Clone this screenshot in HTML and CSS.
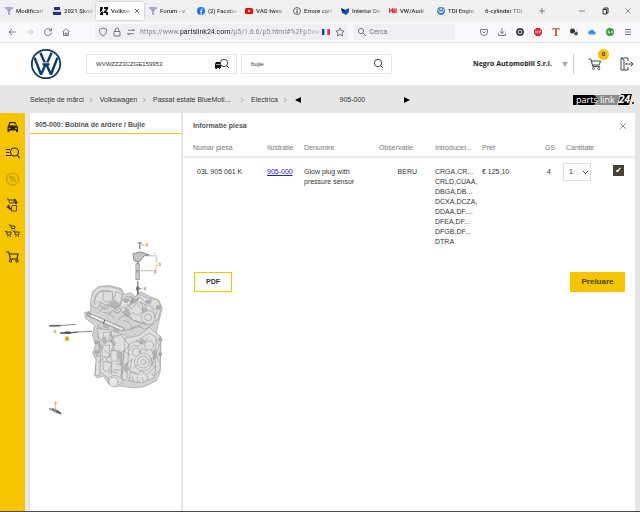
FILE: index.html
```html
<!DOCTYPE html>
<html lang="ro">
<head>
<meta charset="utf-8">
<title>partslink24</title>
<link rel="stylesheet" href="styles.css">
</head>
<body>
<div class="tabs">
  <a class="tab" href="#"><svg class="ico8" viewBox="0 0 8 8"><path d="M0 1h8M2 3h4M4 3v5" stroke="#8d8fc0" stroke-width="1.4"/></svg><span>Modificari</span></a>
  <a class="tab" href="#"><svg class="ico8" viewBox="0 0 8 8"><path d="M1 0h6v3H1zM0 5h8v3H0z" fill="#2b2d86"/><path d="M0 4h8" stroke="#99a" stroke-width=".6"/></svg><span>2021 Skod</span></a>
  <a class="tab active" href="#"><svg class="ico8" viewBox="0 0 8 8"><path d="M0 0h3l-1 4-2 1zM4 0h4v2L6 5h2v3H6V6H3l3-4H4zM0 6l3-2v4H0z" fill="#111"/></svg><span>Volksw</span><svg class="close" viewBox="0 0 6 6"><path d="M1 1l4 4M5 1L1 5" stroke="#444" stroke-width=".8"/></svg></a>
  <a class="tab" href="#"><svg class="ico8" viewBox="0 0 8 8"><path d="M0 1h8M2 3h4M4 3v5" stroke="#8d8fc0" stroke-width="1.4"/></svg><span>Forum - v</span></a>
  <a class="tab" href="#"><svg class="ico8" viewBox="0 0 8 8"><circle cx="4" cy="4" r="4" fill="#1877f2"/><path d="M4.2 8V3q0-1.3 1.5-1M3 4.500h2.400" fill="none" stroke="#fff"/></svg><span>(2) Facebo</span></a>
  <a class="tab" href="#"><svg class="ico8" viewBox="0 0 8 8"><rect y="1" width="8" height="6" rx="1.500" fill="#f00"/><path d="M3 2.500v3L5.600 4z" fill="#fff"/></svg><span>VAG twea</span></a>
  <a class="tab" href="#"><svg class="ico8" viewBox="0 0 8 8"><circle cx="4" cy="4" r="3.500" fill="none" stroke="#444" stroke-width=".8"/><path d="M4 1.800v1M4 3.400v3" stroke="#333"/></svg><span>Errore cari</span></a>
  <a class="tab" href="#"><svg class="ico8" viewBox="0 0 8 8"><path d="M0 1l4 2 4-2v4L5 8 1 6z" fill="#1256b8"/><path d="M0 1l4 2v2L1 4z" fill="#0a2f70"/></svg><span>Interior De</span></a>
  <a class="tab" href="#"><svg class="ico8" viewBox="0 0 8 8"><path d="M.5 6V2L2 4l1.500-2v4M5 6V2h2l.5 1-.5 1H5l2.500 2" fill="none" stroke="#e8303c" stroke-width="1.200"/></svg><span>VW/Audi</span></a>
  <a class="tab" href="#"><svg class="ico8" viewBox="0 0 8 8"><circle cx="4" cy="4" r="4" fill="#4a7fc0"/><path d="M1 2l2 4 1-2 1 2 2-4M3 1l1 2 1-2" fill="none" stroke="#fff" stroke-width=".7"/></svg><span>TDI Engin</span></a>
  <a class="tab" href="#"><span>6-cylinder TDI</span></a>
  <button class="plus" aria-label="New tab"><svg class="ico8" viewBox="0 0 8 8"><path d="M1 4h6M4 1v6" stroke="#666" stroke-width=".8"/></svg></button>
  <div class="win">
    <button aria-label="Minimize"><svg class="ico8" viewBox="0 0 8 8"><path d="M1 4h6" stroke="#555" stroke-width=".8"/></svg></button>
    <button aria-label="Restore"><svg class="ico8" viewBox="0 0 8 8"><path d="M2 2.500h3.500V7H2zM3 2.500V1h4v5H5.500" fill="none" stroke="#333"/></svg></button>
    <button aria-label="Close"><svg class="ico8" viewBox="0 0 8 8"><path d="M1.500 1.500l5 5M6.500 1.500l-5 5" stroke="#666" stroke-width=".7"/></svg></button>
  </div>
</div>
<div class="toolbar">
  <div class="tools">
    <button aria-label="Back"><svg class="ico10" viewBox="0 0 10 10"><path d="M8.500 5H2M5 2L2 5l3 3" class="ln"/></svg></button>
    <button aria-label="Forward"><svg class="ico10" viewBox="0 0 10 10"><path d="M1.500 5H8M5 2l3 3-3 3" class="ln pale"/></svg></button>
    <button aria-label="Reload"><svg class="ico10" viewBox="0 0 10 10"><path d="M8 3.300A3.500 3.500 0 1 0 8.500 5.500M8.500 1v2.800H5.800" class="ln"/></svg></button>
    <button aria-label="Home"><svg class="ico10" viewBox="0 0 10 10"><path d="M1.500 5L5 1.500 8.500 5M2.500 4.500v4h5v-4M4.200 8.500V6h1.600v2.500" class="ln"/></svg></button>
  </div>
  <div class="field url">
    <svg class="ico10" viewBox="0 0 10 10"><path d="M5 1l3.500 1.200C8.500 6 7.500 8 5 9 2.500 8 1.500 6 1.500 2.200z" class="ln"/></svg>
    <svg class="ico10" viewBox="0 0 10 10"><path d="M2 4.500h6V9H2zM3.200 4.500V3q0-2 1.800-2t1.800 2v1.500" class="ln"/></svg>
    <svg class="ico10" viewBox="0 0 10 10"><path d="M2 3.300h7M6.500 1.800L8 3.300M8 6.700H1M3.500 8.200L2 6.700" class="ln"/></svg>
    <span class="address">https://www.<em>partslink24.com</em>/p5/1.6.6/p5.html#%2Fp5vwag</span>
    <svg class="ico10" viewBox="0 0 10 10"><path d="M1 2h2.700v6H1z" fill="#1b3f9c"/><path d="M3.700 2h2.600v6H3.700z" fill="#fff"/><path d="M6.300 2H9v6H6.300z" fill="#e8323e"/></svg>
    <svg class="ico10" viewBox="0 0 10 10"><path d="M5 1l1.200 2.700 2.900.3L7 6l.6 3L5 7.500 2.400 9 3 6 .9 4l2.900-.3z" class="ln"/></svg>
  </div>
  <div class="field find">
    <svg class="ico10" viewBox="0 0 10 10"><circle cx="4" cy="4" r="2.600" class="ln"/><path d="M6 6l3 3" class="ln"/></svg>
    <input type="text" aria-label="Cerca" placeholder="Cerca">
  </div>
  <div class="tools">
    <button aria-label="Pocket"><svg class="ico10" viewBox="0 0 10 10"><path d="M1.500 2.500h7V5A3.500 3.500 0 0 1 1.500 5zM3.200 4.200L5 6l1.800-1.800" class="ln"/></svg></button>
    <button aria-label="Downloads"><svg class="ico10" viewBox="0 0 10 10"><path d="M5 1v5.500M2.700 4.300L5 6.500l2.300-2.200M1.500 6.500v2h7v-2" class="ln"/></svg></button>
    <button aria-label="Camera"><svg class="ico10" viewBox="0 0 10 10"><circle cx="5" cy="5" r="4" fill="#484b52"/><circle cx="5" cy="5" r="1.700" fill="#484b52" stroke="#ddd" stroke-width=".8"/></svg></button>
    <button aria-label="Ad blocker"><svg class="ico10" viewBox="0 0 10 10"><path d="M3.300 1h3.400L9 3.300v3.400L6.700 9H3.300L1 6.700V3.300z" fill="#e91e3e"/><path d="M2.200 6.300l.8-2.500.8 2.500M4.700 3.800h.8q.8.600 0 1.200.8.600 0 1.200h-.8zM6.800 6.300V3.800h1v1.300h-1" fill="none" stroke="#fff" stroke-width=".5"/></svg></button>
    <button aria-label="Text"><svg class="ico10" viewBox="0 0 10 10"><path d="M1.500 1h7v2.500H8L7.300 2H6v6l1 1H3l1-1V2H2.700L2 3.500h-.5z" fill="#c8684e"/></svg></button>
    <button aria-label="Tools"><svg class="ico10" viewBox="0 0 10 10"><circle cx="3.500" cy="4" r="2.500" fill="#333"/><circle cx="7" cy="6.500" r="2" fill="#555"/><path d="M4 7l5-5" stroke="#ccc"/></svg></button>
    <button aria-label="Cloud"><svg class="ico10" viewBox="0 0 10 10"><path d="M2.800 7.500a1.700 1.700 0 0 1 0-3.400 2.300 2.300 0 0 1 4.400.4 1.500 1.500 0 0 1 0 3z" fill="#2f93f5"/></svg></button>
    <button aria-label="Extension"><svg class="ico10" viewBox="0 0 10 10"><circle cx="5" cy="5" r="4" fill="#3d9b47"/><path d="M4.500 4Q3.200 3.300 3 5q.2 1.500 1.600 1V5M6 5h2M7 4v2" fill="none" stroke="#fff" stroke-width=".7"/></svg></button>
    <button aria-label="Menu"><svg class="ico10" viewBox="0 0 10 10"><path d="M2 2.500h6M2 5h6M2 7.500h6" class="ln"/></svg></button>
  </div>
</div>

<header class="head">
  <svg class="vw" viewBox="0 0 32 32"><circle cx="16" cy="16" r="14.200" fill="#fff" stroke="#0e3c66" stroke-width="1.800"/><path d="M10.400 4.800L16 17.500 21.600 4.800M12.500 16.200h7M4.600 9.800L11 26.500 16 15.500 21 26.500 27.400 9.800" fill="none" stroke="#0e3c66" stroke-width="2.400" stroke-linejoin="bevel"/><path d="M12.800 14.800h6.400" stroke="#fff" stroke-width=".8"/></svg>
  <div class="box">
    <input type="text" aria-label="VIN" value="WVWZZZ3CZGE159953">
    <svg class="carfind" viewBox="0 0 16 12"><path d="M1 6l1-2h4v2l1 1v3H6v1H5v-1H3v1H1.500v-1H1z" fill="#111"/><path d="M2 6.500h4" stroke="#ddd" stroke-width=".7"/><circle cx="10" cy="5" r="3.700" fill="#fff" stroke="#333" stroke-width=".9"/><path d="M12.600 7.600L15 10" stroke="#333"/></svg>
  </div>
  <div class="box">
    <input type="text" aria-label="Căutare" value="bujie">
    <svg class="carfind" viewBox="0 0 16 12"><circle cx="9" cy="5" r="3.700" fill="none" stroke="#333" stroke-width=".9"/><path d="M11.600 7.600L14 10" stroke="#333"/></svg>
  </div>
  <button class="account">Negro Automobili S.r.l.<svg class="ico8" viewBox="0 0 8 8"><path d="M1 2h6L4 7z" fill="#aaa"/></svg></button>
  <button class="cart" aria-label="Coș"><svg class="ico16" viewBox="0 0 16 16"><path d="M1.500 3h2.300l2 7.500h7M4.300 5h9.200l-1.300 4H5.500" fill="none" stroke="#333" stroke-width=".9"/><circle cx="6.500" cy="12.500" r="1" fill="none" stroke="#333" stroke-width=".8"/><circle cx="11.800" cy="12.500" r="1" fill="none" stroke="#333" stroke-width=".8"/></svg><span class="badge">0</span></button>
  <button class="exit" aria-label="Ieșire"><svg class="ico16" viewBox="0 0 16 16"><path d="M9 5V2H2v12h7v-3M2 2l3 2v10M6 8h7.500M11.500 5.500L14 8l-2.500 2.500" fill="none" stroke="#333" stroke-width=".9"/></svg></button>
</header>

<nav class="crumbs">
  <a href="#">Selecţie de mărci</a><i></i>
  <a href="#">Volkswagen</a><i></i>
  <a class="long" href="#">Passat estate BlueMoti...</a><i></i>
  <a href="#">Electrica</a><i></i>
  <div class="pager">
    <button aria-label="Înapoi"><svg class="ico8" viewBox="0 0 8 8"><path d="M7 1v6L1 4z"/></svg></button>
    <span>905-000</span>
    <button aria-label="Înainte"><svg class="ico8" viewBox="0 0 8 8"><path d="M1 1v6l6-3z"/></svg></button>
  </div>
  <svg class="brand" viewBox="0 0 62 12"><path d="M20 1h27l-3 10H20z" fill="#8a8a8a"/><path d="M0 1h21l4 4-4 6H0z"/><path d="M48 0h11l-3 11H45z"/><text x="3" y="9">parts</text><text x="27" y="9" fill="#ddd">link</text><text x="46" y="9" class="big">24</text><circle cx="60" cy="9" r="1"/></svg>
</nav>

<main class="main">
  <nav class="side">
    <a href="#" aria-label="Vehicul"><svg class="ico16" viewBox="0 0 16 16"><path d="M3 7l1.500-4h6L12 7l1 1v5h-2v-1.500H4.500V13h-2V8z" fill="#2a2500"/><path d="M4.500 6.500l.8-2.300h4.900l.8 2.300z" fill="#f5c500"/><path d="M3.500 9.300h2M10 9.300h2" stroke="#f5c500"/></svg></a>
    <a href="#" aria-label="Căutare"><svg class="ico16" viewBox="0 0 16 16"><path d="M1 4.500h4M1 7.500h3.500M1 10.500h5" stroke="#2a2500"/><circle cx="9.500" cy="7" r="4" fill="none" stroke="#2a2500" stroke-width="1.100"/><path d="M12.300 10l2.200 3" stroke="#2a2500" stroke-width="1.200"/></svg></a>
    <a href="#" aria-label="Oferte"><svg class="ico16" viewBox="0 0 16 16"><g fill="none" stroke="#a88600" stroke-width=".8"><circle cx="7.500" cy="8" r="6"/><circle cx="5.700" cy="6.500" r="1.100"/><circle cx="9.500" cy="9.500" r="1.100"/><path d="M9.500 5.500l-4 5"/></g></svg></a>
    <a href="#" aria-label="Transfer"><svg class="ico16" viewBox="0 0 16 16"><g fill="none" stroke="#2a2500" stroke-width=".8"><path d="M2 2h1.500l1 4h4l1-3H4M7.500 8.500h4V14h-5v-4z"/><path d="M9 2.500q2 0 2.300 3M3.500 9q0 3 2.500 3" stroke-width="1.300"/></g><path d="M9 5h4l-2 2.500zM1.500 10.500h4l-2-3z" fill="#2a2500"/></svg></a>
    <a href="#" aria-label="Coșuri"><svg class="ico16" viewBox="0 0 16 16"><g fill="none" stroke="#2a2500" stroke-width=".9"><path d="M4 2h1.500l1 3.500h3L10 3H6M6.500 7h.8M9 7h.8M0 8.500h1.500l1 3.500h3L6.200 9H2M2.500 13.500h.8M5 13.500h.8M8 8.500h1.500l1 3.500h3l.7-3H10M10.500 13.500h.8M13 13.500h.8"/></g></svg></a>
    <a href="#" aria-label="Coș"><svg class="ico16" viewBox="0 0 16 16"><path d="M1.500 3h2.300l1.500 7h7.500M4.300 5h8.700l-1 5" fill="none" stroke="#2a2500" stroke-width="1.100"/><circle cx="5.500" cy="12" r="1.200" fill="none" stroke="#2a2500"/><circle cx="12" cy="12" r="1.200" fill="none" stroke="#2a2500"/></svg></a>
  </nav>

  <section class="panel figure">
    <h2>905-000: Bobina de ardere / Bujie</h2>
    <div class="drawing">
      <svg viewBox="30 229 152 186" stroke-linejoin="round" stroke-linecap="round">
        <!-- cylinder block silhouette -->
        <path d="M91 303L93 291 99 286 110 285 122 288 125 294 131 292 136 296 141 291 153 297 160 300 163 308 160 320 157 333 162 337 161 372 157 381 144 387 134 388 120 386 110 385 104 376 98 378 95 375 97 360 93 353 96 345 93 335 95 325 86 318 85 312 91 311z" fill="#d2d2d2" stroke="#aaa" stroke-width=".8"/>
        <g fill="#dedede" stroke="#999" stroke-width=".6">
          <path d="M91 304q0-15 10-18 10-1 20 3l3 5-8 10-13-4-6 8z"/>
          <path d="M95 304q-1-11 6-14h9q5 4 3 9l-5 6-9-4z"/>
          <path d="M104 291h9v9q-4 3-9 0zM117 291l6 3-2 9-7-2z"/>
          <path d="M121 303l6-7 8 1 5-3 10 4 8 1 4 8-3 12-12 5-15-5-11-9z"/>
          <path d="M126 308q6-8 14-6l12 4 4 8-8 9-14-3z"/>
          <circle cx="149" cy="317" r="7"/><circle cx="149" cy="317" r="3.500"/>
          <path d="M98 328l14 2 10 4v46l-12-1-10-8 1-22z"/>
          <path d="M104 332h8v9h-8zM114 335h8v10h-8zM103 345h7v12h-7zM112 350h9v11h-9zM104 361l8 2v11l-8-4z"/>
          <path d="M114 337l10-3 5 4-1 12-9 3-5-5z"/>
          <path d="M126 338l14-3 10-8 11 9v34l-9 8-15 4-14-3z"/>
          <path d="M130 344l10-5 10-6 7 4-1 34-12 8-16-1z"/>
          <path d="M131 372l8 3 2-5 6 5 10-9-2 12-13 5-11-2z"/>
          <circle cx="144" cy="362" r="9"/><circle cx="144" cy="362" r="6"/><circle cx="144" cy="362" r="2.500"/>
          <circle cx="150" cy="345" r="4.500"/><circle cx="137" cy="352" r="4"/>
          <path d="M109 378q4-4 9-2l6 4-6 7q-7 0-9-4z"/><ellipse cx="114" cy="382" rx="4.500" ry="4.800" fill="#e8e8e8"/>
          <path d="M97 355l4 2-1 18-4 1z"/>
        </g>
        <g fill="#b5b5b5"><path d="M110 303l6-4 4 5-4 4zM123 311l5-3 4 6-5 3zM102 338l4-2 2 6-4 3zM117 353l4-3 1 8-4 2zM139 341l4-3 3 3-4 4zM130 300l4-3 2 5-4 3zM142 309l5-3 2 4-5 3zM124 366l4-4 2 8-4 3zM104 322l7 3-2 4-6-2zM113 326l8 3-2 4-5-2zM153 351l4-4v11l-3 3zM99 345l3-2v8l-3 2zM147 299l6 1-2 4-5-1z"/></g>
        <g fill="none" stroke="#858585" stroke-width=".5">
          <path d="M94 302l4-9 6-3M99 312l9-8 8 4 5-4M108 316l5-6 6 3 5-7 6 4M119 319l7-5 5 3M122 298l5 4 4-6 5 5 4-5 6 6 6-3M128 304l4 5 5-6 5 6 5-5M133 312l6 3 5-4M142 301l2 8M133 298l-3 9M153 306l5 5-3 6M97 336l5 4-3 5 5 3M112 331l-3 9 7 2-4 8 8 1M105 350l6 5-5 5 7 3-4 7 9 3M120 352l5 5-5 7 5 5-4 7M123 336l7 9-5 6 6 4M127 364l6-5-3 11 7 3M137 341l7 3 4-6M152 350l5 7-6 2 4 8M133 376l1 5M138 377l1 5M143 378l1 3M148 376l1 4M153 373l1 3M157 339l3 6-3 9 3 8M117 364h7M114 370h7M130 330l8-5 8 4 9-6M120 326l5 4 9-2M102 322l-4 4 5 3M100 305l6 4 5-5 6 6 3-5M104 312l6 1 4 4M124 320l6 2 3 6 8-2M136 320l5 4 5-2M110 334l4 3-3 5 5 3M99 362l6-4M130 350l4-5 6 1M140 352l3-4 5 3M134 368l4-3M151 366l4-5"/>
        </g>
        <!-- intake rail -->
        <path d="M89 314l34 15" stroke="#858585" stroke-width="3.800"/><path d="M89 314l34 15" stroke="#ebebeb" stroke-width="2.400"/><path d="M105 320l-1 3" stroke="#555" stroke-width="1"/>
        <g fill="#b5b5b5" stroke="#888" stroke-width=".5"><circle cx="89" cy="314" r="2"/><circle cx="97" cy="342" r="1.700"/><circle cx="97" cy="352" r="1.700"/><circle cx="161" cy="339" r="1.600"/><circle cx="161" cy="354" r="1.600"/><circle cx="159" cy="307" r="2"/><circle cx="135" cy="300" r="2"/><circle cx="127" cy="300" r="2"/></g>
        <!-- coil, plug and callouts -->
        <path d="M140.500 243v5M139 242h3M138.500 255v8M138.500 281v6" stroke="#888" stroke-width="1.300"/>
        <path d="M134 253l7-2 9 3-5 1-5 6-5-1z" fill="#c4c4c4" stroke="#666" stroke-width=".7"/>
        <path d="M137 263h3v7h-3zM137 271h3v8h-3z" fill="#ccc" stroke="#666" stroke-width=".6"/>
        <path d="M137.200 286h2.600l.8 3-1.200 1v4h-1.800v-4l-1.200-1zM138 297h1v3h-1z" fill="#777"/>
        <path d="M142 244h4M147 255h8M141 270h13M140 288h4M155 252q2 1 2 5v4l2 2-2 2v5q0 3-2 4" fill="none" stroke="#777" stroke-width=".5"/>
        <g fill="#fff3c8"><rect x="145.500" y="242" width="4" height="4"/><rect x="158.500" y="261" width="4" height="4"/><rect x="153.500" y="268" width="4" height="4"/><rect x="143.500" y="286" width="4" height="4"/><rect x="53" y="329" width="4" height="4"/><rect x="53.500" y="402" width="4" height="4"/></g>
        <rect x="65" y="336" width="4.500" height="5" fill="#ffcf2e"/>
        <g class="num"><text x="146.500" y="245.500">2</text><text x="159.500" y="265">1</text><text x="154.500" y="272">3</text><text x="144.500" y="289.500">4</text><text x="53.800" y="333">5</text><text x="66" y="340">6</text><text x="54.500" y="405.500">7</text></g>
        <path d="M60 325.200l16-1.200M77 331.800l15-.8" stroke="#888" stroke-width="1"/>
        <path d="M50 325.500l10-.3M61 332.800l3-.3 9-.3 4-.3" stroke="#666" stroke-width="1.700"/><path d="M66 332.500h4" stroke="#555" stroke-width="2.500"/>
        <path d="M55.500 406v4" stroke="#b89d45" stroke-width=".6"/><path d="M50 409l8 4M53 409l7 4" stroke="#888" stroke-width="1.800"/><path d="M57 411l4 3" stroke="#444" stroke-width="1.200"/>
      </svg>
    </div>
  </section>

  <section class="panel">
    <div class="title"><h2>Informatie piesa</h2><button aria-label="Închide"><svg class="ico8" viewBox="0 0 8 8"><path d="M1 1l6 6M7 1L1 7" stroke="#777" stroke-width=".8"/></svg></button></div>
    <table>
      <colgroup><col class="c-no"><col class="c-il"><col><col class="c-ob"><col class="c-in"><col class="c-pr"><col class="c-gs"><col class="c-qt"><col class="c-ck"></colgroup>
      <thead><tr><th>Numar piesa</th><th>Ilustratie</th><th>Denumire</th><th>Observatie</th><th>Introducer...</th><th>Pret</th><th>GS</th><th>Cantitate</th><th></th></tr></thead>
      <tbody><tr>
        <td>03L 905 061 K</td><td><a href="#">905-000</a></td><td>Glow plug with<br>pressure sensor</td><td class="obs">BERU</td>
        <td>CRGA,CR...<br>CRLD,CUAA,<br>DBGA,DB...<br>DCXA,DCZA,<br>DDAA,DF....<br>DFEA,DF...<br>DFGB,DF...<br>DTRA</td>
        <td>€ 125,10</td><td class="gs">4</td><td class="ctl"><select aria-label="Cantitate"><option>1</option></select></td><td class="ctl"><input type="checkbox" aria-label="Selectat" checked></td>
      </tr></tbody>
    </table>
    <div class="actions"><button class="pdf">PDF</button><button class="take">Preluare</button></div>
  </section>
</main>
</body>
</html>
```
FILE: styles.css
```css
* { box-sizing: border-box; }
body {
  margin: 0;
  min-height: 100vh;
  display: flex;
  flex-direction: column;
  background: #e6e6e6;
  border-bottom: 1px solid #4a4a4a;
  font: 7px/10px "Liberation Sans", Arial, sans-serif;
  color: #333;
}
button, input, select { font: inherit; color: inherit; margin: 0; padding: 0; border: 0; background: none; border-radius: 0; }
input[type="text"] { outline: 0; min-width: 0; flex: 1; }
a { color: inherit; text-decoration: none; }
svg { display: block; flex: none; }
h2 { margin: 0; font-size: 7px; font-weight: bold; color: #555; }
.ico8 { width: 8px; height: 8px; }
.ico10 { width: 10px; height: 10px; }
.ico16 { width: 16px; height: 16px; }
.ln { fill: none; stroke: #5b5b66; stroke-width: .8; }
.pale { stroke: #bbb; }

/* browser chrome */
.tabs { display: flex; align-items: center; height: 22px; background: #f0f0f0; font: 6px/10px Roboto, sans-serif; color: #333; }
.tab { display: flex; align-items: center; gap: 3px; flex: 0 1 48px; min-width: 0; height: 18px; padding: 0 2px 0 5px; white-space: nowrap; }
.tab span { flex: 1; font-weight: 500; -webkit-mask-image: linear-gradient(90deg, #000 55%, #0003); mask-image: linear-gradient(90deg, #000 55%, #0003); }
.close { width: 6px; height: 6px; }
.active { background: #fff; border-radius: 2px; box-shadow: 0 0 2px #999; padding: 0 4px; }
.plus { margin-left: 10px; }
.win { display: flex; gap: 15px; margin-left: auto; padding-right: 8px; }
.toolbar { display: flex; align-items: center; height: 21px; background: #f9f9fb; border-bottom: 1px solid #e0e0e0; padding: 0 3px; font: 7px/10px Roboto, sans-serif; }
.tools { display: flex; }
.tools button { width: 18px; height: 18px; display: grid; place-items: center; }
.field { display: flex; align-items: center; height: 16px; background: #f0f0f4; border-radius: 2px; }
.url { flex: 256; min-width: 0; margin: 0 6px 0 20px; padding: 0 3px; }
.url svg { margin-right: 4px; }
.url svg:last-child { margin-right: 0; }
.address { flex: 1; overflow: hidden; white-space: nowrap; color: #888; -webkit-mask-image: linear-gradient(90deg, #000 90%, #0003); mask-image: linear-gradient(90deg, #000 90%, #0003); }
.address em { font-style: normal; color: #222; }
.find { flex: 98; min-width: 0; margin-right: 20px; padding: 0 3px; gap: 2px; }
.find ::placeholder { color: #777; }

/* site header */
.head { display: flex; align-items: center; height: 42px; padding: 0 5px 0 30px; background: #fff; }
.vw { width: 32px; height: 32px; margin-right: 24px; }
.box { display: flex; align-items: center; flex: 0 1 151px; min-width: 0; height: 20px; margin-right: 4px; padding: 0 6px 0 9px; border: 1px solid #e6e6e6; background: #fff; }
.box input { font-size: 6px; }
.carfind { width: 16px; height: 12px; }
.account { display: flex; align-items: center; gap: 9px; height: 20px; margin-left: auto; padding-right: 4px; border-right: 1px solid #ccc; font: bold 7px/10px "Open Sans", sans-serif; color: #222; }
.cart { position: relative; margin-left: 13px; }
.badge { position: absolute; left: 11px; top: -7px; width: 11px; height: 11px; border-radius: 50%; background: #f5c500; font: bold 6px/11px "Open Sans", sans-serif; text-align: center; }
.exit { margin-left: 16px; }

.crumbs { display: flex; align-items: center; height: 28px; padding: 0 5px 0 30px; border-top: 1px solid #ececec; }
.crumbs i { width: 4px; height: 4px; margin: 0 8px 0 4px; border: solid #bbb; border-width: 1px 1px 0 0; transform: rotate(45deg); }
.long { min-width: 82px; }
.pager { display: flex; align-items: center; justify-content: space-between; flex: 0 1 117px; }
.brand { width: 62px; height: 12px; margin-left: auto; font: 9px/10px "Open Sans", sans-serif; }
.brand text { fill: #fff; }
.brand .big { font: italic bold 10px/10px "Open Sans", sans-serif; }

/* content */
.main { flex: 1; display: grid; grid-template-columns: 28px 151px 1fr; column-gap: 2px; padding-right: 5px; }
.side { display: flex; flex-direction: column; align-items: center; gap: 10px; width: 25px; padding-top: 6px; background: #f5c500; }
.panel { background: #fff; min-width: 0; }
.figure { display: flex; flex-direction: column; }
.figure h2 { height: 21px; padding: 7px 5px 3px; border-bottom: 1px solid #f5c500; }
.drawing { flex: 1; display: flex; align-items: center; }
.drawing svg { width: 100%; }
.num { font: 4px "Liberation Sans", sans-serif; fill: #444; }
.title { display: flex; align-items: center; justify-content: space-between; height: 26px; padding: 0 8px 0 10px; }
table { width: 100%; table-layout: fixed; border-collapse: collapse; }
th { height: 18px; padding: 0; font-weight: normal; text-align: left; color: #777; vertical-align: middle; white-space: nowrap; border-bottom: 2px solid #ececec; }
td { padding: 9px 0 0; vertical-align: top; white-space: nowrap; }
th:first-child { padding-left: 10px; }
td:first-child { padding-left: 14px; }
td a { color: #22d; text-decoration: underline; }
.c-no { width: 84px; }
.c-il { width: 37px; }
.c-ob { width: 56px; }
.c-in { width: 47px; }
.c-pr { width: 63px; }
.c-gs { width: 21px; }
.c-qt { width: 47px; }
.c-ck { width: 22px; }
.obs { text-align: right; padding-right: 18px; }
.gs { padding-left: 2px; }
.ctl { padding-top: 5px; }
select {
  appearance: none; display: block; width: 28px; height: 18px; margin-left: -3px; padding-left: 5px; border: 1px solid #ddd;
  background: linear-gradient(45deg, transparent 35%, #444 35% 65%, transparent 65%) 19px 7px / 3px 3px no-repeat, linear-gradient(-45deg, transparent 35%, #444 35% 65%, transparent 65%) 21px 7px / 3px 3px no-repeat, #fff;
}
input[type="checkbox"] { appearance: none; display: grid; place-items: center; width: 11px; height: 11px; margin-top: 2px; background: #444237; }
input[type="checkbox"]::before { content: "✔"; font: 8px/10px "DejaVu Sans", sans-serif; color: #fff; }
.actions { display: flex; justify-content: space-between; padding: 25px 10px 0 11px; }
.actions button { height: 20px; font-weight: bold; }
.pdf { width: 38px; border: 1px solid #f5c500; }
.take { width: 55px; background: #f5c500; font-size: 8px; color: #4a4310; }
```
